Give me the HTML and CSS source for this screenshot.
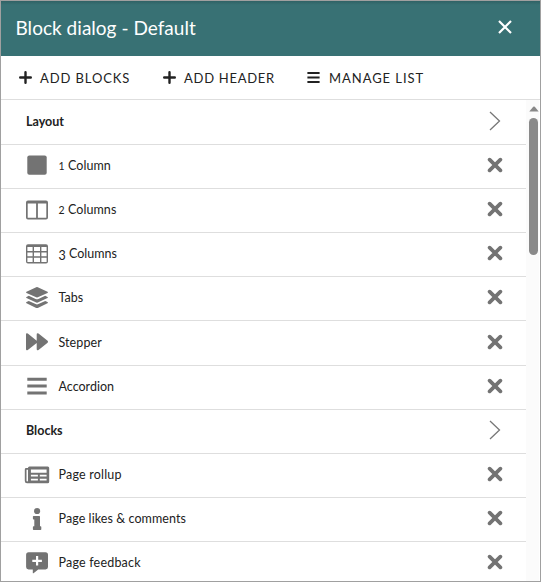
FILE: index.html
```html
<!DOCTYPE html>
<html lang="en">
<head>
<meta charset="utf-8">
<title>Block dialog - Default</title>
<link rel="stylesheet" href="styles.css">
</head>
<body>
<main class="dialog">
  <header class="title-bar">
    <h1><span class="w-title">Block dialog - Default</span></h1>
    <svg class="close" viewBox="0 0 16 16"><path d="M2 2L14 14M14 2L2 14"/></svg>
  </header>
  <nav class="toolbar">
    <a class="action"><svg viewBox="0 0 13 13"><path d="M6.5 1.2V11.8M1.2 6.5H11.8"/></svg><span class="w-add">ADD BLOCKS</span></a>
    <a class="action header-action"><svg viewBox="0 0 13 13"><path d="M6.5 1.2V11.8M1.2 6.5H11.8"/></svg><span class="w-header">ADD HEADER</span></a>
    <a class="action manage-action"><svg class="bars" viewBox="0 0 13 13"><path d="M.4 2H12.6M.4 6.5H12.6M.4 11H12.6"/></svg><span class="w-manage">MANAGE LIST</span></a>
  </nav>
  <div class="body">
    <div class="list">
      <div class="row group first"><span class="label w-layout">Layout</span><svg class="chevron" viewBox="0 0 12 20"><path d="M1 1L10.5 10L1 19"/></svg></div>
      <div class="row"><svg class="icon" viewBox="0 0 26 24"><rect x="3.3" y="1.5" width="19.4" height="19.2" rx="2"/></svg><span class="label w-one"><span class="small-num">1</span> Column</span><svg class="remove" viewBox="0 0 16 16"><path d="M2.6 2.6L13.4 13.4M13.4 2.6L2.6 13.4"/></svg></div>
      <div class="row"><svg class="icon" viewBox="0 0 26 24"><path fill-rule="evenodd" d="M4 2.4H22Q24 2.4 24 4.4V19.4Q24 21.4 22 21.4H4Q2 21.4 2 19.4V4.4Q2 2.4 4 2.4ZM3.7 5.4V19.7H12.1V5.4ZM13.9 5.4V19.7H22.3V5.4Z"/></svg><span class="label w-two"><span class="small-num">2</span> Columns</span><svg class="remove" viewBox="0 0 16 16"><path d="M2.6 2.6L13.4 13.4M13.4 2.6L2.6 13.4"/></svg></div>
      <div class="row"><svg class="icon" viewBox="0 0 26 24"><path fill-rule="evenodd" d="M4 2.2H22Q24 2.2 24 4.2V19.4Q24 21.4 22 21.4H4Q2 21.4 2 19.4V4.2Q2 2.2 4 2.2ZM3.4 4.9V9H8.6V4.9ZM10 4.9V9H16V4.9ZM17.4 4.9V9H22.6V4.9ZM3.4 10.4V14.3H8.6V10.4ZM10 10.4V14.3H16V10.4ZM17.4 10.4V14.3H22.6V10.4ZM3.4 15.7V20H8.6V15.7ZM10 15.7V20H16V15.7ZM17.4 15.7V20H22.6V15.7Z"/></svg><span class="label w-three"><span class="low-num">3</span> Columns</span><svg class="remove" viewBox="0 0 16 16"><path d="M2.6 2.6L13.4 13.4M13.4 2.6L2.6 13.4"/></svg></div>
      <div class="row"><svg class="icon" viewBox="0 0 26 24"><path d="M12.2 1.2Q13 .9 13.8 1.2L23.5 5.7Q24.5 6.3 23.5 6.9L13.8 11.3Q13 11.6 12.2 11.3L2.5 6.9Q1.5 6.3 2.5 5.7ZM4.8 9.8L11.6 12.9Q13 13.5 14.4 12.9L21.2 9.8L23.5 10.9Q24.5 11.5 23.5 12.1L13.8 16.5Q13 16.8 12.2 16.5L2.5 12.1Q1.5 11.5 2.5 10.9ZM4.8 15L11.6 18.1Q13 18.7 14.4 18.1L21.2 15L23.5 16.1Q24.5 16.7 23.5 17.3L13.8 21.9Q13 22.2 12.2 21.9L2.5 17.3Q1.5 16.7 2.5 16.1Z"/></svg><span class="label w-tabs">Tabs</span><svg class="remove" viewBox="0 0 16 16"><path d="M2.6 2.6L13.4 13.4M13.4 2.6L2.6 13.4"/></svg></div>
      <div class="row tall"><svg class="icon" viewBox="0 0 26 24"><path d="M2 4.6Q2 2.6 3.8 3.6L12.7 10.7V4.6Q12.7 2.6 14.5 3.6L23.6 10.8Q24.5 11.8 23.6 12.8L14.5 20Q12.7 21 12.7 19V12.9L3.8 20Q2 21 2 19Z"/></svg><span class="label w-stepper">Stepper</span><svg class="remove" viewBox="0 0 16 16"><path d="M2.6 2.6L13.4 13.4M13.4 2.6L2.6 13.4"/></svg></div>
      <div class="row"><svg class="icon" viewBox="0 0 26 24"><path d="M3.3 2.7H22.7V5.7H3.3ZM3.3 9.6H22.7V12.6H3.3ZM3.3 16.5H22.7V19.5H3.3Z"/></svg><span class="label w-accordion">Accordion</span><svg class="remove" viewBox="0 0 16 16"><path d="M2.6 2.6L13.4 13.4M13.4 2.6L2.6 13.4"/></svg></div>
      <div class="row group"><span class="label w-blocks">Blocks</span><svg class="chevron" viewBox="0 0 12 20"><path d="M1 1L10.5 10L1 19"/></svg></div>
      <div class="row"><svg class="icon" viewBox="0 0 26 24"><path fill-rule="evenodd" d="M5.4 3.5H23.8Q25.2 3.5 25.2 5V18.7Q25.2 20.3 23.6 20.3H3Q.8 20.3 .8 18V6.5Q.8 5.1 2.2 5.1H4V5Q4 3.5 5.4 3.5ZM4 6.8H2.5V17.5Q2.5 18.5 3.2 18.5Q4 18.5 4 17.5ZM6.9 6.4V9.7H22.6V6.4ZM6.9 11.8V13.5H13.9V11.8ZM15.8 11.8V13.5H22.6V11.8ZM6.9 15.7V17.4H13.9V15.7ZM15.8 15.7V17.4H22.6V15.7Z"/></svg><span class="label w-rollup">Page rollup</span><svg class="remove" viewBox="0 0 16 16"><path d="M2.6 2.6L13.4 13.4M13.4 2.6L2.6 13.4"/></svg></div>
      <div class="row"><svg class="icon" viewBox="0 0 26 24"><circle cx="13.1" cy="4" r="3.1"/><path d="M9.6 8.9H15.3Q16 8.9 16 9.6V19.3H16.6Q17.3 19.3 17.3 20V22.2Q17.3 22.9 16.6 22.9H9.6Q8.9 22.9 8.9 22.2V20Q8.9 19.3 9.6 19.3H10.3V12.5H9.6Q8.9 12.5 8.9 11.8V9.6Q8.9 8.9 9.6 8.9Z"/></svg><span class="label w-likes">Page likes &amp; comments</span><svg class="remove" viewBox="0 0 16 16"><path d="M2.6 2.6L13.4 13.4M13.4 2.6L2.6 13.4"/></svg></div>
      <div class="row last"><svg class="icon" viewBox="0 0 26 24"><path fill-rule="evenodd" d="M4.6 1.2H21.5Q24 1.2 24 3.7V16Q24 18.4 21.5 18.4H14.2L9.5 22.2Q8.8 22.6 8.8 21.8V18.4H4.6Q2.1 18.4 2.1 16V3.7Q2.1 1.2 4.6 1.2ZM12 5V8.7H8.3V10.9H12V14.6H14.2V10.9H17.9V8.7H14.2V5Z"/></svg><span class="label w-feedback">Page feedback</span><svg class="remove" viewBox="0 0 16 16"><path d="M2.6 2.6L13.4 13.4M13.4 2.6L2.6 13.4"/></svg></div>
    </div>
    <div class="scrollbar"><svg viewBox="0 0 10 6"><path d="M.3 5.5L4.2 .8Q5 .1 5.8 .8L9.7 5.5Z"/></svg><div class="thumb"></div></div>
  </div>
</main>
</body>
</html>
```
FILE: styles.css
```css
* { box-sizing: border-box; }
body { margin: 0; overflow: hidden; font-family: Lato, "Open Sans", sans-serif; color: #222; }
svg { display: block; flex: none; }
.dialog { width: 541px; height: 582px; display: flex; flex-direction: column; border: 1px solid #a0a0a0; background: #fff; overflow: hidden; }
.title-bar { flex: none; height: 55px; padding: 0 27px 3px 14px; display: flex; align-items: center; justify-content: space-between; color: #fff; background: linear-gradient(#2f6265, #387174 4px); }
h1 { margin: 1px 0 0 .5px; font-size: 19px; line-height: 24px; font-weight: 400; white-space: nowrap; }
.close { width: 16px; height: 16px; fill: none; stroke: #fff; stroke-width: 2.2; }
.toolbar { flex: none; height: 44px; padding-left: 18px; display: flex; align-items: center; border-bottom: 1px solid #dedede; font-size: 13px; }
.action { display: flex; align-items: center; gap: 8px; width: 144px; white-space: nowrap; }
.manage-action { gap: 9px; }
.action svg { width: 13px; height: 13px; fill: none; stroke: #222; stroke-width: 2.4; stroke-linecap: round; }
.action .bars { stroke-width: 1.9; stroke-linecap: butt; }
.body { flex: 1; min-height: 0; display: flex; }
.list { width: 525px; overflow: hidden; }
.row { height: 44px; padding: 0 23px 2px 23px; display: flex; align-items: center; border-bottom: 1px solid #dedede; font-size: 12.5px; line-height: 16px; white-space: nowrap; }
.group { font-weight: 700; padding-left: 25px; padding-bottom: 3px; }
.group .label { padding-top: 2px; }
.first { height: 45px; padding-bottom: 2px; }
.tall { height: 45px; }
.tall .label, .last .label { padding-top: 1px; }
.icon { width: 26px; height: 24px; margin-right: 8.5px; fill: #737373; }
.remove { width: 16px; height: 16px; margin: -1px 0 0 auto; fill: none; stroke: #737373; stroke-width: 3.7; stroke-linecap: round; }
.chevron { width: 12px; height: 20px; margin-left: auto; margin-right: 2px; fill: none; stroke: #777; stroke-width: 1.3; }
.small-num { font-size: 10.5px; }
.low-num { display: inline-block; line-height: 12px; transform: translateY(2px); }
.scrollbar { width: 13px; padding: 6px 0 0 2px; background: #fbfbfb; display: flex; flex-direction: column; align-items: center; gap: 6px; }
.scrollbar svg { width: 10px; height: 6px; fill: #888; }
.thumb { width: 9px; height: 137px; border-radius: 5px; background: #8a8a8a; }
.w-title { letter-spacing: .03px; }
.w-add { letter-spacing: .9px; }
.w-header { letter-spacing: .72px; }
.w-manage { letter-spacing: .95px; }
.w-one, .w-two, .w-likes, .w-stepper { letter-spacing: .08px; }
.w-rollup, .w-feedback { letter-spacing: .2px; }
```
